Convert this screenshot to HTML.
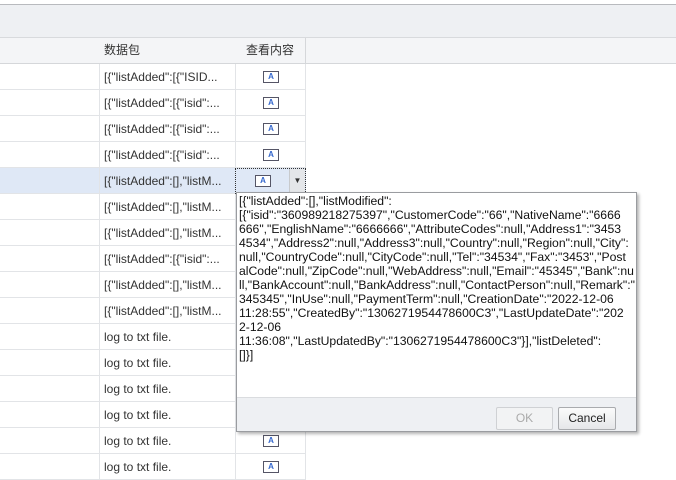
<!DOCTYPE html><html><head><meta charset="utf-8"><style>
*{margin:0;padding:0;box-sizing:border-box}
body{width:676px;height:472px;overflow:hidden;background:#fff;font-family:"Liberation Sans","Noto Sans CJK SC",sans-serif;font-size:12px;color:#333;position:relative}
.top{position:absolute;left:0;top:4px;width:676px;height:34px;background:#eef0f3;border-top:1px solid #b8babe;border-bottom:1px solid #d8dadd}
.hdr{position:absolute;top:38px;height:26px;background:#f4f5f7;border-bottom:1px solid #d5d7da;border-right:1px solid #d5d7da;line-height:25px}
.row{position:absolute;left:0;width:306px;height:26px;border-bottom:1px solid #e2e4e7}
.c{position:absolute;top:0;height:26px;line-height:26px;border-right:1px solid #e2e4e7}
.c1{left:0;width:100px}.c2{left:99px;width:137px;padding-left:5px;white-space:nowrap;overflow:hidden}.c3{left:235px;width:71px}
.ic{position:absolute;left:263px;width:16px;height:12px;border:1px solid #556;background:#fff;font-size:8px;color:#36c;text-align:center;line-height:10px;font-weight:bold}
.pop{position:absolute;left:236px;top:192px;width:401px;height:240px;border:1px solid #9a9ca0;background:#fff;box-shadow:2px 2px 3px rgba(0,0,0,.3);overflow:hidden}
.txt{position:absolute;left:2px;top:1px;font-size:12.2px;line-height:14px;color:#111;letter-spacing:0px;white-space:nowrap}
.foot{position:absolute;left:0;top:204px;width:399px;height:34px;background:#eef0f3;border-top:1px solid #dadcdf}
.btn{position:absolute;top:9px;height:23px;border:1px solid #a9abae;border-radius:2px;background:linear-gradient(#fbfbfb,#e6e7e9);text-align:center;line-height:21px}
</style></head><body>
<div class="top"></div>
<div class="hdr" style="left:0;width:100px"></div>
<div class="hdr" style="left:99px;width:137px;padding-left:5px">数据包</div>
<div class="hdr" style="left:235px;width:71px;text-align:center">查看内容</div>
<div class="hdr" style="left:306px;width:370px;border-right:none"></div>

<div class="row" style="top:64px"><div class="c c1"></div><div class="c c2">[{"listAdded":[{"ISID...</div><div class="c c3"></div></div>
<div class="row" style="top:90px"><div class="c c1"></div><div class="c c2">[{"listAdded":[{"isid":...</div><div class="c c3"></div></div>
<div class="row" style="top:116px"><div class="c c1"></div><div class="c c2">[{"listAdded":[{"isid":...</div><div class="c c3"></div></div>
<div class="row" style="top:142px"><div class="c c1"></div><div class="c c2">[{"listAdded":[{"isid":...</div><div class="c c3"></div></div>
<div class="row" style="top:168px;background:#dfe8f6"><div class="c c1"></div><div class="c c2">[{"listAdded":[],"listM...</div><div class="c c3" style="border:1px dotted #333;background:#dfe8f6"><div style="position:absolute;right:0;top:0;width:16px;height:24px;background:#e4e6e9;border-left:1px solid #c8cacd;font-size:8px;text-align:center;line-height:24px">▼</div></div></div>
<div class="row" style="top:194px"><div class="c c1"></div><div class="c c2">[{"listAdded":[],"listM...</div><div class="c c3"></div></div>
<div class="row" style="top:220px"><div class="c c1"></div><div class="c c2">[{"listAdded":[],"listM...</div><div class="c c3"></div></div>
<div class="row" style="top:246px"><div class="c c1"></div><div class="c c2">[{"listAdded":[{"isid":...</div><div class="c c3"></div></div>
<div class="row" style="top:272px"><div class="c c1"></div><div class="c c2">[{"listAdded":[],"listM...</div><div class="c c3"></div></div>
<div class="row" style="top:298px"><div class="c c1"></div><div class="c c2">[{"listAdded":[],"listM...</div><div class="c c3"></div></div>
<div class="row" style="top:324px"><div class="c c1"></div><div class="c c2">log to txt file.</div><div class="c c3"></div></div>
<div class="row" style="top:350px"><div class="c c1"></div><div class="c c2">log to txt file.</div><div class="c c3"></div></div>
<div class="row" style="top:376px"><div class="c c1"></div><div class="c c2">log to txt file.</div><div class="c c3"></div></div>
<div class="row" style="top:402px"><div class="c c1"></div><div class="c c2">log to txt file.</div><div class="c c3"></div></div>
<div class="row" style="top:428px"><div class="c c1"></div><div class="c c2">log to txt file.</div><div class="c c3"></div></div>
<div class="row" style="top:454px"><div class="c c1"></div><div class="c c2">log to txt file.</div><div class="c c3"></div></div>

<div class="ic" style="top:71px">A</div>
<div class="ic" style="top:97px">A</div>
<div class="ic" style="top:123px">A</div>
<div class="ic" style="top:149px">A</div>
<div class="ic" style="top:175px;left:255px">A</div>
<div class="ic" style="top:435px">A</div>
<div class="ic" style="top:461px">A</div>

<div class="pop">
<div class="txt">[{"listAdded":[],"listModified":<br>[{"isid":"360989218275397","CustomerCode":"66","NativeName":"6666<br>666","EnglishName":"6666666","AttributeCodes":null,"Address1":"3453<br>4534","Address2":null,"Address3":null,"Country":null,"Region":null,"City":<br>null,"CountryCode":null,"CityCode":null,"Tel":"34534","Fax":"3453","Post<br>alCode":null,"ZipCode":null,"WebAddress":null,"Email":"45345","Bank":nu<br>ll,"BankAccount":null,"BankAddress":null,"ContactPerson":null,"Remark":"<br>345345","InUse":null,"PaymentTerm":null,"CreationDate":"2022-12-06<br>11:28:55","CreatedBy":"1306271954478600C3","LastUpdateDate":"202<br>2-12-06<br>11:36:08","LastUpdatedBy":"1306271954478600C3"}],"listDeleted":<br>[]}]</div>
<div class="foot">
<div class="btn" style="left:259px;width:57px;color:#aaa;border-color:#cfd1d4;background:#f2f3f4">OK</div>
<div class="btn" style="left:321px;width:58px;color:#222">Cancel</div>
</div>
</div>
</body></html>
